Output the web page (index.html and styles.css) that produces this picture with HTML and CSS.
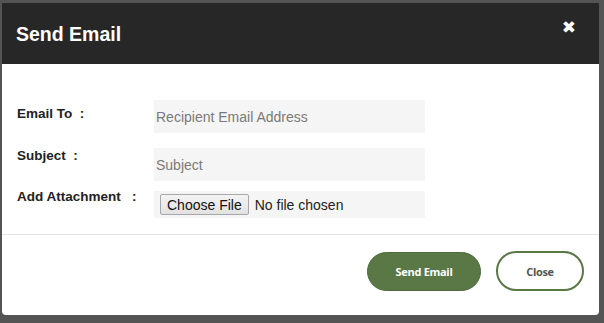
FILE: index.html
```html
<!DOCTYPE html>
<html lang="en">
<head>
    <meta charset="UTF-8">
    <meta name="viewport" content="width=device-width, initial-scale=1.0">
    <title>Send Email</title>
    <link rel="stylesheet" href="styles.css">
</head>
<body>
    <div class="modal">
        <div class="modal-header">
            <h1 class="modal-title">Send Email</h1>
            <span class="close-x">&#x2716;</span>
        </div>

        <div class="modal-body">
            <div class="form-grid">
                <label class="form-label first" for="emailTo">Email To &nbsp;:</label>
                <input type="text" id="emailTo" class="form-input" placeholder="Recipient Email Address">

                <label class="form-label" for="subject">Subject &nbsp;:</label>
                <input type="text" id="subject" class="form-input" placeholder="Subject">

                <label class="form-label tight-label" for="attachment">Add Attachment &nbsp;&nbsp;:</label>
                <div class="file-box tight">
                    <input type="file" id="attachment" class="file-input">
                </div>
            </div>
        </div>

        <div class="modal-footer">
            <button class="btn btn-send">Send Email</button>
            <button class="btn btn-close">Close</button>
        </div>
    </div>
</body>
</html>
```

FILE: styles.css
```css
body {
    margin: 0;
    padding: 3px 5px 8px 2px;
    background-color: #545454;
    font-family: "Liberation Sans", Arial, sans-serif;
}

.modal {
    width: 597px;
    height: 312px;
    background-color: #fff;
    border-radius: 0 0 4px 4px;
    display: flex;
    flex-direction: column;
    overflow: hidden;
}

.modal-header {
    height: 61px;
    background-color: #272727;
    display: flex;
    justify-content: space-between;
    padding: 0 23px 0 14px;
    box-sizing: border-box;
    flex-shrink: 0;
}

.modal-title {
    margin: 0;
    align-self: center;
    color: #fff;
    font-size: 19.5px;
    font-weight: bold;
    line-height: 24px;
}

.close-x {
    margin-top: 14px;
    color: #fff;
    font-family: "DejaVu Sans", sans-serif;
    font-size: 17px;
    font-weight: bold;
    line-height: 20px;
}

.modal-body {
    padding: 36px 0 16px 15px;
    border-bottom: 1px solid #e6e6e6;
}

.form-grid {
    display: grid;
    grid-template-columns: 137px 271px;
    row-gap: 15px;
    align-items: start;
}

.form-label {
    padding: 0;
    color: #222;
    font-size: 13.5px;
    font-weight: bold;
    line-height: 15px;
}

.form-label.first {
    padding-top: 6px;
}

.tight {
    margin-top: -5px;
}

.tight-label {
    margin-top: -7px;
}

.form-input {
    height: 33px;
    margin: 0;
    padding: 0 2px;
    border: none;
    background-color: #f5f5f5;
    font-family: "Liberation Sans", Arial, sans-serif;
    font-size: 14px;
    color: #333;
    box-sizing: border-box;
    outline: none;
}

.form-input::placeholder {
    color: #7a7a7a;
}

.file-box {
    height: 27px;
    padding: 3px 6px;
    background-color: #f5f5f5;
    box-sizing: border-box;
}

.file-input {
    font-family: "Liberation Sans", Arial, sans-serif;
    font-size: 14px;
    color: #222;
}

.file-input::file-selector-button {
    height: 21px;
    margin-right: 6px;
    padding: 0 6px;
    border: 1px solid #a8a8a8;
    border-radius: 2px;
    background: linear-gradient(#f4f4f4, #e2e2e2);
    font-family: "Liberation Sans", Arial, sans-serif;
    font-size: 14px;
    color: #111;
}

.modal-footer {
    display: flex;
    justify-content: flex-end;
    gap: 15px;
    padding: 16px 15px 0 0;
}

.btn {
    height: 40px;
    border-radius: 20px;
    font-family: "Open Sans", sans-serif;
    font-size: 11px;
    font-weight: bold;
    letter-spacing: -0.3px;
    cursor: pointer;
}

.btn-send {
    width: 114px;
    margin-top: 1px;
    height: 39px;
    background-color: #5a7746;
    border: 1px solid #4c6a3b;
    color: #fff;
}

.btn-close {
    width: 88px;
    background-color: #fff;
    border: 2px solid #5a7746;
    color: #4d5a4a;
}
```
